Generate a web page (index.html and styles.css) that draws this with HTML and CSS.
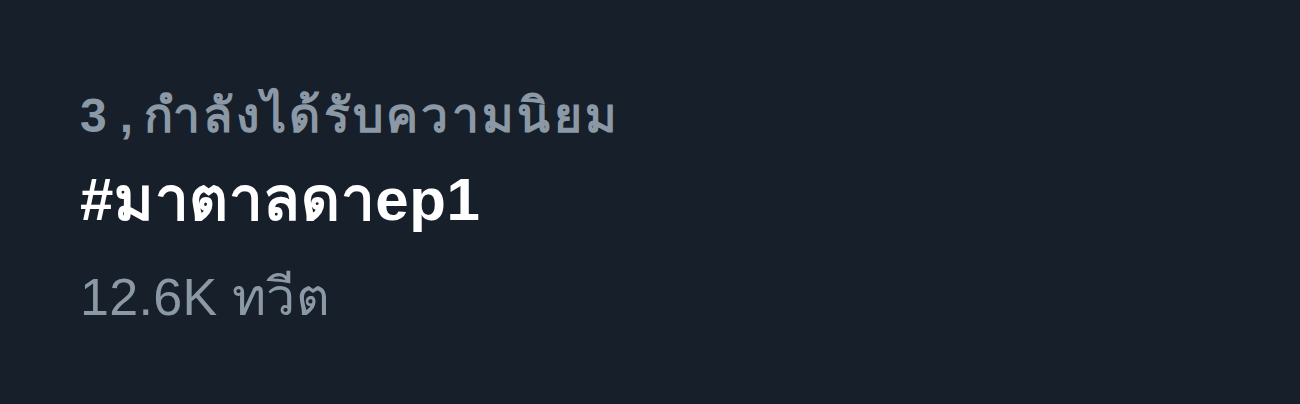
FILE: index.html
```html
<!DOCTYPE html>
<html lang="th">
<head>
  <meta charset="UTF-8">
  <title>กำลังได้รับความนิยม</title>
  <link rel="stylesheet" href="styles.css">
</head>
<body>
  <!-- รายการเทรนด์ -->
  <div class="trend">
    <div class="trend-meta">3<span class="comma">,</span><span class="thai">กำลังได้รับความนิยม</span></div>
    <div class="trend-name">#มาตาลดาep1</div>
    <div class="trend-count">12.6K ทวีต</div>
  </div>
</body>
</html>
```

FILE: styles.css
```css
body {
  margin: 0;
  height: 404px;
  background: #161f2a;
  font-family: "Liberation Sans", "Noto Sans", sans-serif;
}

.trend {
  padding: 84px 0 0 80px;
  display: flex;
  flex-direction: column;
}

.trend-meta {
  font-size: 48px;
  font-weight: bold;
  color: #8b98a5;
  line-height: 64px;
}

.comma {
  margin: 0 11px 0 13px;
}

.thai {
  letter-spacing: 3.3px;
}

.trend-name {
  margin-top: 9px;
  font-size: 60px;
  font-weight: bold;
  color: #ffffff;
  line-height: 86px;
  letter-spacing: 0.6px;
}

.trend-count {
  margin-top: 11px;
  font-size: 52px;
  color: #8b98a5;
  line-height: 86px;
  letter-spacing: 0.3px;
}
```
